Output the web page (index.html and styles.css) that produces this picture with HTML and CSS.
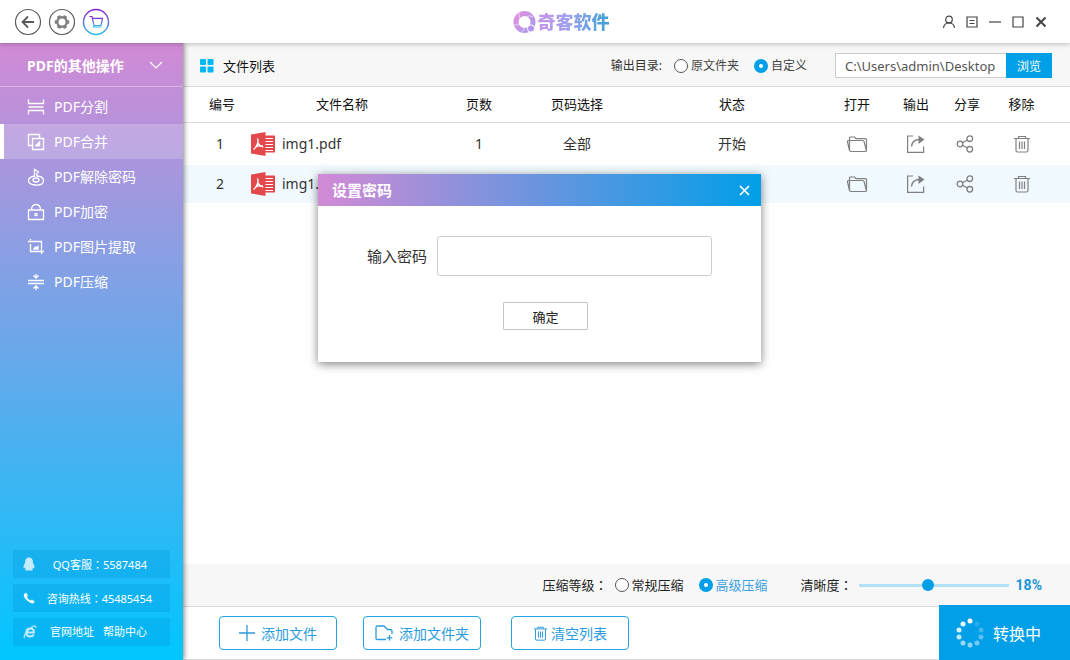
FILE: index.html
```html
<!DOCTYPE html>
<html lang="zh-CN">
<head>
<meta charset="utf-8">
<title>奇客软件</title>
<link rel="stylesheet" href="styles.css">
</head>
<body>
<svg class="defs" width="0" height="0" aria-hidden="true">
  <defs>
    <linearGradient id="cart-gradient" x1="0" y1="0" x2="0" y2="1"><stop offset="0" stop-color="#8a1fd0"/><stop offset=".5" stop-color="#5b6ae0"/><stop offset="1" stop-color="#2cbcf5"/></linearGradient>
    <linearGradient id="logo-gradient" x1="0" y1="0" x2="1" y2="1"><stop offset="0" stop-color="#e08fdc"/><stop offset="1" stop-color="#a99af0"/></linearGradient>
    <symbol id="pdf" viewBox="0 0 24 24"><path d="M13 3.500h11v17H13z" fill="#e3484a"/><path d="M14 6.500h8M14 9.500h8M14 12.500h8M14 15.500h8M14 18.500h8" stroke="#fff" stroke-width="1.200"/><path d="M0 2.500 14.500 0V24L0 21.500z" fill="#e3484a"/><path d="M6.200 6.500q1.300 1 .6 4.200Q5.500 15.500 2.500 17.500M6.800 10.700q1.700 3.300 5.400 4.300M4.200 15.200q3-1.700 7.800-1.200" fill="none" stroke="#fff" stroke-width="1.400"/></symbol>
    <symbol id="folder" viewBox="0 0 22 18"><path d="M3.500 15.500 1.500 7q-.2-1.500 1-1.500h14q1.300 0 1.700 1.500l2.300 9M3.500 5.500V3q0-1 1-1h4l1.500 1.700h9.500q1 0 1 1V15.500q0 1-1 1h-14q-1.500 0-2-1z" fill="none" stroke="currentColor" stroke-width="1.200"/></symbol>
    <symbol id="export" viewBox="0 0 20 20"><path d="M7 2H1.600v16.400h16V12.500" fill="none" stroke="currentColor" stroke-width="1.200"/><path d="M5.500 12.500Q6 6 13 5.500" fill="none" stroke="currentColor" stroke-width="1.500"/><path d="M12.500 1.500 18.500 5.500l-6 4.500z" fill="currentColor"/></symbol>
    <symbol id="share" viewBox="0 0 18 18"><g fill="none" stroke="currentColor" stroke-width="1.300"><circle cx="4" cy="9" r="2.800"/><circle cx="13.800" cy="3.700" r="2.800"/><circle cx="13.800" cy="14.300" r="2.800"/><path d="M6.500 7.700 11.300 5M6.500 10.300l4.800 2.700"/></g></symbol>
    <symbol id="trash" viewBox="0 0 18 18"><path d="M1 3.500h16M5.500 3V1.500h7V3M3 4v11.500q0 1.500 1.500 1.500h9q1.500 0 1.500-1.500V4M6.500 6.500v7.500M9 6.500v7.500M11.500 6.500v7.500" fill="none" stroke="currentColor" stroke-width="1.200"/></symbol>
  </defs>
</svg>
<div class="app">
  <header class="titlebar">
    <div class="titlebar-tools">
      <button class="round-button" aria-label="返回"><svg width="28" height="28" viewBox="0 0 28 28" fill="none" stroke="#5a5a5a"><circle cx="14" cy="14" r="12.500" stroke-width="1.200"/><path d="M20 14H8.500M14 8.500 8.500 14l5.500 5.500" stroke-width="1.800"/></svg></button>
      <button class="round-button" aria-label="设置"><svg width="28" height="28" viewBox="0 0 28 28" fill="none"><circle cx="14" cy="14" r="12.500" stroke="#5a5a5a" stroke-width="1.200"/><circle cx="14" cy="14" r="4.700" stroke="#808080" stroke-width="2.400"/><path d="M6.800 14h2.400M18.800 14h2.400M10.400 7.800l1.200 2.100M16.400 18.100l1.200 2.100M17.600 7.800l-1.200 2.100M11.600 18.100l-1.200 2.100" stroke="#808080" stroke-width="3.600"/></svg></button>
      <button class="round-button" aria-label="购物车"><svg width="28" height="28" viewBox="0 0 28 28" fill="none" stroke="url(#cart-gradient)"><circle cx="14" cy="14" r="12.500" stroke-width="1.400"/><path d="M7.500 8.500h2.500l2 9h7l1.500-7.200h-9.800M12 17.500l-.5 1.500h8" stroke-width="1.200"/></svg></button>
    </div>
    <h1 class="brand">
      <svg width="24" height="24" viewBox="0 0 24 24"><circle cx="11.500" cy="12" r="8.500" fill="none" stroke="url(#logo-gradient)" stroke-width="5"/><path d="M7 8.500Q5 6 6.500 2.500M14 6.500q3-1.500 6 .5M6.500 14.500Q4 16 1.500 14.500M11.500 17.500q-.5 3-3 4.500" fill="none" stroke="#fff" stroke-width=".6"/><circle cx="18" cy="18.500" r="3.600" fill="#b395ee" stroke="#fff"/></svg>
      <span class="brand-name">奇客软件</span>
    </h1>
    <div class="window-tools">
      <button aria-label="用户"><svg width="14" height="14" viewBox="0 0 14 14"><circle cx="7" cy="4.500" r="3.300"/><path d="M1.500 13Q2 8 7 8t5.500 5"/></svg></button>
      <button aria-label="菜单"><svg width="14" height="14" viewBox="0 0 14 14"><path d="M2 2h10v10H2zM4.500 5.500h5M4.500 8.500h5"/></svg></button>
      <button aria-label="最小化"><svg width="14" height="14" viewBox="0 0 14 14"><path d="M1 7h12"/></svg></button>
      <button aria-label="最大化"><svg width="14" height="14" viewBox="0 0 14 14"><path d="M2 2h10v10H2z"/></svg></button>
      <button aria-label="关闭"><svg width="14" height="14" viewBox="0 0 14 14"><path d="m2.500 2.500 9 9M11.500 2.500l-9 9" stroke-width="2"/></svg></button>
    </div>
  </header>

  <div class="body">
    <aside class="sidebar">
      <button class="sidebar-title">PDF的其他操作<svg width="14" height="8" viewBox="0 0 14 8" fill="none" stroke="#fff" stroke-width="1.200"><path d="m1 1 6 6 6-6"/></svg></button>
      <nav class="menu">
        <a class="menu-item" href="#"><svg width="18" height="18" viewBox="0 0 18 18"><path d="M1.500 1.500v4h15v-4M1.500 9h15M1.500 16.500v-4h15v4"/></svg>PDF分割</a>
        <a class="menu-item active" href="#"><svg width="18" height="18" viewBox="0 0 18 18"><path d="M5 12.500H1.500v-11h11V5M5.500 5.500h11v11h-11zM9 12.500h3.500V9"/><path d="M9 12.500 12.500 9v3.500z" fill="#fff"/></svg>PDF合并</a>
        <a class="menu-item" href="#"><svg width="18" height="18" viewBox="0 0 18 18"><path d="M7.500 9V1.500L11.500 4 9.800 5.500V9M7.500 8Q1.500 9 1.500 12.800T9 17t7.500-4.200T10 8"/><ellipse cx="9" cy="12" rx="3" ry="2"/></svg>PDF解除密码</a>
        <a class="menu-item" href="#"><svg width="18" height="18" viewBox="0 0 18 18"><path d="M1.500 7h15v9.500h-15zM4.500 7Q4.500 1.500 9 1.500T13.500 7"/><circle cx="9" cy="11.500" r="1.200"/></svg>PDF加密</a>
        <a class="menu-item" href="#"><svg width="18" height="18" viewBox="0 0 18 18"><path d="M1 3.500h13.500V16M3.500 6v7.500H17M3.500 1v1.200"/><path d="m7 11 1.500-2 1 1L11 8.500V11z" fill="#fff"/></svg>PDF图片提取</a>
        <a class="menu-item" href="#"><svg width="18" height="18" viewBox="0 0 18 18"><path d="M1 7.500h16M1 10.500h16M9 1v3.500M6.500 2.500 9 5l2.500-2.500M9 17v-3.500M6.500 15.500 9 13l2.500 2.500"/></svg>PDF压缩</a>
      </nav>
      <div class="contacts">
        <a class="contact contact-qq" href="#"><svg width="12" height="14" viewBox="0 0 12 14" fill="#c5ecfd"><path d="M6 .5q4 0 4 5.500 2 3 1.500 5.500L10 10.500l-.5 1.500q1 1-.5 1.500H3q-1.500-.5-.5-1.500L2 10.500.500 11.500Q0 9 2 6 2 .5 6 .5z"/></svg><span>QQ客服<i class="colon" lang="zh-TW">：</i>5587484</span></a>
        <a class="contact contact-phone" href="#"><svg width="12" height="14" viewBox="0 0 12 14" fill="#e8f8ff"><path d="M1 3 3 1.500l2 3L4 6q1 2.500 3.500 3.500L9 8.500l2.800 2-1.500 2Q8 13 4 9.500T1 3z"/></svg><span>咨询热线<i class="colon" lang="zh-TW">：</i>45485454</span></a>
        <a class="contact contact-web" href="#"><svg width="14" height="14" viewBox="0 0 14 14" fill="none" stroke="#c5ecfd"><path d="M3.500 7.500h7.500Q11 3.500 7.200 3.500T3.300 7.500t4 4q2.500 0 3.400-2" stroke-width="2"/><path d="M2 12.500Q0 12.500 2.500 8.500T9 2t4 1" stroke-width="1.200"/></svg><span>官网地址</span><span>帮助中心</span></a>
      </div>
    </aside>

    <main class="content">
      <section class="toolbar">
        <svg width="14" height="14" viewBox="0 0 14 14" fill="#00b7f5"><rect width="6" height="6" rx="1"/><rect x="7.500" width="6" height="6" rx="1"/><rect y="7.500" width="6" height="6" rx="1"/><rect x="7.500" y="7.500" width="6" height="6" rx="1"/></svg>
        <h2 class="toolbar-title">文件列表</h2>
        <span class="output-label">输出目录:</span>
        <label class="choice choice-small"><input type="radio" name="output">原文件夹</label>
        <label class="choice choice-small"><input type="radio" name="output" checked>自定义</label>
        <div class="path-group">
          <input class="path-input" type="text" aria-label="输出目录" value="C:\Users\admin\Desktop">
          <button class="browse-button">浏览</button>
        </div>
      </section>

      <div class="files">
        <table class="file-table">
          <colgroup><col class="col-index"><col><col class="col-pages"><col class="col-range"><col class="col-status"><col class="col-open"><col class="col-export"><col class="col-share"><col class="col-remove"></colgroup>
          <thead><tr><th>编号</th><th>文件名称</th><th>页数</th><th>页码选择</th><th>状态</th><th>打开</th><th>输出</th><th>分享</th><th>移除</th></tr></thead>
          <tbody>
            <tr>
              <td>1</td>
              <td><div class="file-name"><svg width="24" height="24"><use href="#pdf"/></svg>img1.pdf</div></td>
              <td>1</td><td>全部</td><td>开始</td>
              <td><button class="icon-button" aria-label="打开"><svg width="22" height="18"><use href="#folder"/></svg></button></td>
              <td><button class="icon-button" aria-label="输出"><svg width="20" height="20"><use href="#export"/></svg></button></td>
              <td class="share-cell"><button class="icon-button" aria-label="分享"><svg width="18" height="18"><use href="#share"/></svg></button></td>
              <td><button class="icon-button" aria-label="移除"><svg width="18" height="18"><use href="#trash"/></svg></button></td>
            </tr>
            <tr class="selected">
              <td>2</td>
              <td><div class="file-name"><svg width="24" height="24"><use href="#pdf"/></svg>img1.</div></td>
              <td></td><td></td><td></td>
              <td><button class="icon-button" aria-label="打开"><svg width="22" height="18"><use href="#folder"/></svg></button></td>
              <td><button class="icon-button" aria-label="输出"><svg width="20" height="20"><use href="#export"/></svg></button></td>
              <td class="share-cell"><button class="icon-button" aria-label="分享"><svg width="18" height="18"><use href="#share"/></svg></button></td>
              <td><button class="icon-button" aria-label="移除"><svg width="18" height="18"><use href="#trash"/></svg></button></td>
            </tr>
          </tbody>
        </table>
      </div>

      <section class="options">
        <span class="level-label">压缩等级<i class="colon" lang="zh-TW">：</i></span>
        <label class="choice"><input type="radio" name="level">常规压缩</label>
        <label class="choice choice-on"><input type="radio" name="level" checked>高级压缩</label>
        <label class="clarity-label" for="clarity">清晰度<i class="colon" lang="zh-TW">：</i></label>
        <input class="slider" id="clarity" type="range" min="0" max="100" value="46">
        <output class="percent" for="clarity">18%</output>
      </section>

      <footer class="actions">
        <button class="outline-button"><svg width="16" height="16" viewBox="0 0 16 16" fill="none" stroke="currentColor" stroke-width="1.300"><path d="M8 0v16M0 8h16"/></svg>添加文件</button>
        <button class="outline-button"><svg width="18" height="16" viewBox="0 0 18 16" fill="none" stroke="currentColor" stroke-width="1.300"><path d="M11 14.500H2.500q-1.500 0-1.500-1.500V2.500Q1 1 2.500 1H9l3.500 3.500H15q2 0 2 2V9M14.500 10v5.500M11.800 12.800h5.500"/></svg>添加文件夹</button>
        <button class="outline-button clear-button"><svg width="15" height="15"><use href="#trash"/></svg>清空列表</button>
        <button class="convert-button"><svg width="28" height="30" viewBox="0 0 28 30" fill="#fff"><circle cx="14" cy="3" r="2.500"/><circle cx="7" cy="6" r="2.500" opacity=".9"/><circle cx="3" cy="12" r="2.500" opacity=".85"/><circle cx="3" cy="19" r="2.500" opacity=".75"/><circle cx="7" cy="25" r="2.500" opacity=".6"/><circle cx="14" cy="27" r="2.500" opacity=".55"/><circle cx="21" cy="25" r="2.500" opacity=".45"/><circle cx="25" cy="19" r="2.500" opacity=".35"/><circle cx="25" cy="12" r="2.500" opacity=".25"/><circle cx="21" cy="6" r="2.500" opacity=".15"/></svg>转换中</button>
      </footer>
    </main>
  </div>

  <form class="dialog" role="dialog" aria-labelledby="dialog-title">
    <div class="dialog-header">
      <h2 class="dialog-title" id="dialog-title">设置密码</h2>
      <button class="dialog-close" type="button" aria-label="关闭"><svg width="11" height="11" viewBox="0 0 11 11" stroke="#fff" stroke-width="1.700"><path d="m1 1 9 9M10 1l-9 9"/></svg></button>
    </div>
    <div class="dialog-body">
      <div class="field">
        <label for="password">输入密码</label>
        <input id="password" type="password">
      </div>
      <button class="confirm-button" type="button">确定</button>
    </div>
  </form>
</div>
</body>
</html>
```

FILE: styles.css
```css
* {
  box-sizing: border-box;
}

body,
h1,
h2 {
  margin: 0;
}

body,
button,
input {
  font-family: "Noto Sans", "Noto Sans CJK SC", sans-serif;
}

button {
  padding: 0;
  border: 0;
  background: none;
}

a {
  color: inherit;
  text-decoration: none;
}

svg {
  display: block;
  flex: none;
}

.defs {
  position: absolute;
}

.colon {
  font-family: "Noto Sans CJK TC", sans-serif;
  font-style: normal;
}

.app {
  position: relative;
  display: flex;
  flex-direction: column;
  min-height: 100vh;
  background: #fff;
  font-size: 14px;
  line-height: 20px;
  color: #333;
}

/* Title bar */
.titlebar {
  display: grid;
  grid-template-columns: 1fr auto 1fr;
  align-items: center;
  height: 43px;
  padding: 0 18px 0 14px;
  background: #fff;
  box-shadow: 0 1px 5px rgba(0, 0, 0, 0.25);
  z-index: 2;
}

.titlebar-tools {
  display: flex;
  gap: 6px;
}

.brand {
  display: flex;
  align-items: center;
  gap: 1px;
  margin-left: 56px;
  font-size: 18px;
  line-height: 26px;
}

.brand-name {
  background: linear-gradient(90deg, #c493ec, #9da3f0 45%, #38a0d2);
  background-clip: text;
  color: transparent;
  font-weight: 900;
}

.window-tools {
  display: flex;
  justify-content: flex-end;
}

.window-tools button {
  display: flex;
  justify-content: center;
  width: 23px;
}

.window-tools svg {
  fill: none;
  stroke: #444;
  stroke-width: 1.2;
}

/* Sidebar */
.body {
  display: flex;
  flex: 1;
}

.sidebar {
  display: flex;
  flex-direction: column;
  flex: none;
  width: 183px;
  background: linear-gradient(#d28ad5, #00c6ff);
  box-shadow: 1px 0 5px rgba(0, 0, 0, 0.5);
  color: #fff;
  z-index: 1;
}

.sidebar-title {
  display: flex;
  align-items: center;
  justify-content: space-between;
  height: 44px;
  padding: 0 20px 0 27px;
  border-bottom: 1px solid rgba(255, 255, 255, 0.35);
  color: #fff;
  font-size: 14px;
  font-weight: 700;
}

.menu {
  padding-top: 2px;
}

.menu-item {
  display: flex;
  align-items: center;
  gap: 9px;
  height: 35px;
  padding-left: 27px;
}

.menu-item.active {
  padding-left: 23px;
  border-left: 4px solid #fff;
  background: rgba(255, 255, 255, 0.2);
}

.menu-item svg {
  fill: none;
  stroke: #fff;
  stroke-width: 1.3;
}

.contacts {
  display: flex;
  flex-direction: column;
  gap: 6px;
  margin-top: auto;
  padding: 0 13px 14px;
}

.contact {
  display: flex;
  align-items: center;
  justify-content: space-between;
  height: 28px;
  padding: 0 18px 0 10px;
  background: rgba(0, 150, 220, 0.3);
  font-size: 11px;
}

.contact-qq,
.contact-web {
  padding-right: 23px;
}

.contact-web span:nth-child(2) {
  margin-left: 4px;
}

/* Content */
.content {
  display: flex;
  flex-direction: column;
  flex: 1;
  min-width: 0;
}

.toolbar {
  display: flex;
  align-items: center;
  height: 44px;
  padding: 2px 18px 0 17px;
  border-bottom: 1px solid #dadada;
  background: #f7f7f7;
}

.toolbar-title {
  margin: 0 auto 0 9px;
  color: #111;
  font-size: 13px;
  font-weight: 400;
}

.output-label {
  margin-right: 12px;
  font-size: 12px;
}

.choice {
  display: flex;
  align-items: center;
  gap: 3px;
  color: #222;
  font-size: 13px;
}

.choice input {
  appearance: none;
  width: 14px;
  height: 14px;
  margin: 0;
  border: 1px solid #555;
  border-radius: 50%;
  background: #fff;
}

.choice input:checked {
  border: 5px solid #009fe8;
}

.choice-small {
  margin-right: 15px;
  color: #444;
  font-size: 12px;
}

.choice-small:last-of-type {
  margin-right: 28px;
}

.path-group {
  display: flex;
  height: 25px;
}

.path-input {
  width: 171px;
  padding: 0 9px;
  border: 1px solid #ccc;
  border-right: 0;
  background: #fff;
  color: #555;
  font-size: 13px;
}

.browse-button {
  width: 46px;
  background: #009fe8;
  color: #fff;
  font-size: 12px;
}

.files {
  flex: 1;
}

.file-table {
  width: 100%;
  table-layout: fixed;
  border-collapse: collapse;
}

.col-index { width: 56px; }
.col-pages { width: 68px; }
.col-range { width: 128px; }
.col-status { width: 182px; }
.col-open { width: 68px; }
.col-export { width: 50px; }
.col-share { width: 52px; }
.col-remove { width: 77px; }

.file-table th {
  height: 35px;
  padding: 0;
  border-bottom: 1px solid #dadada;
  color: #111;
  font-size: 13px;
  font-weight: 400;
}

.file-table td {
  height: 43px;
  padding: 0;
  text-align: center;
}

.file-table .selected td {
  height: 38px;
  background: #f0f9fe;
}

.file-table th:first-child {
  padding-left: 22px;
}

.file-table td:first-child {
  padding-left: 18px;
}

.file-table th:last-child,
.file-table td:last-child {
  padding-right: 20px;
}

.file-table .share-cell {
  padding-right: 5px;
}

.file-name {
  display: flex;
  align-items: center;
  gap: 7px;
  padding-left: 12px;
}

.icon-button {
  display: block;
  margin: 0 auto;
  color: #808080;
}

/* Compression options */
.options {
  display: flex;
  align-items: center;
  justify-content: flex-end;
  height: 43px;
  padding-right: 28px;
  border-bottom: 1px solid #dadada;
  background: #f7f7f7;
  color: #222;
  font-size: 13px;
}

.level-label {
  margin-right: 7px;
}

.choice-on {
  margin: 0 33px 0 15px;
  color: #3a9fe0;
}

.clarity-label {
  margin-right: 6px;
}

.slider {
  appearance: none;
  width: 150px;
  height: 12px;
  margin: 0 7px 0 0;
  background: linear-gradient(#b3e1f6, #b3e1f6) center / 100% 3px no-repeat;
}

.slider::-webkit-slider-thumb {
  appearance: none;
  width: 12px;
  height: 12px;
  border-radius: 50%;
  background: #009fe8;
}

.percent {
  color: #1a94d8;
  font-family: Roboto, sans-serif;
  font-size: 14px;
  font-weight: 700;
}

/* Actions */
.actions {
  display: flex;
  align-items: center;
  gap: 26px;
  height: 53px;
  padding-left: 36px;
  border-bottom: 1px solid #dadada;
}

.outline-button {
  display: flex;
  align-items: center;
  justify-content: center;
  gap: 6px;
  width: 118px;
  height: 34px;
  border: 1px solid #23a4e2;
  border-radius: 4px;
  color: #2a9bdc;
  font-size: 14px;
}

.clear-button {
  gap: 3px;
  margin-left: 4px;
}

.convert-button {
  display: flex;
  align-items: center;
  justify-content: center;
  gap: 9px;
  width: 131px;
  height: 55px;
  margin: -2px 0 -1px auto;
  padding-right: 12px;
  background: #009fe8;
  color: #fff;
  font-size: 16px;
}

/* Password dialog */
.dialog {
  position: absolute;
  top: 174px;
  left: 318px;
  width: 443px;
  background: #fff;
  box-shadow: 0 2px 9px rgba(0, 0, 0, 0.5);
  z-index: 3;
}

.dialog-header {
  display: flex;
  align-items: center;
  justify-content: space-between;
  height: 32px;
  padding: 0 11px 0 14px;
  background: linear-gradient(90deg, #d28ad5, #009fe8);
}

.dialog-title {
  color: #fff;
  font-size: 15px;
  font-weight: 700;
}

.dialog-body {
  display: flex;
  flex-direction: column;
  align-items: center;
  gap: 26px;
  padding: 30px 38px 32px;
}

.field {
  display: flex;
  align-items: center;
  gap: 10px;
  font-size: 15px;
}

.field input {
  width: 275px;
  height: 40px;
  padding: 0 10px;
  border: 1px solid #ccc;
  border-radius: 3px;
  font-size: 15px;
}

.confirm-button {
  width: 85px;
  height: 28px;
  margin-left: 12px;
  border: 1px solid #c4c4c4;
  border-radius: 1px;
  color: #222;
  font-size: 13px;
}
```
